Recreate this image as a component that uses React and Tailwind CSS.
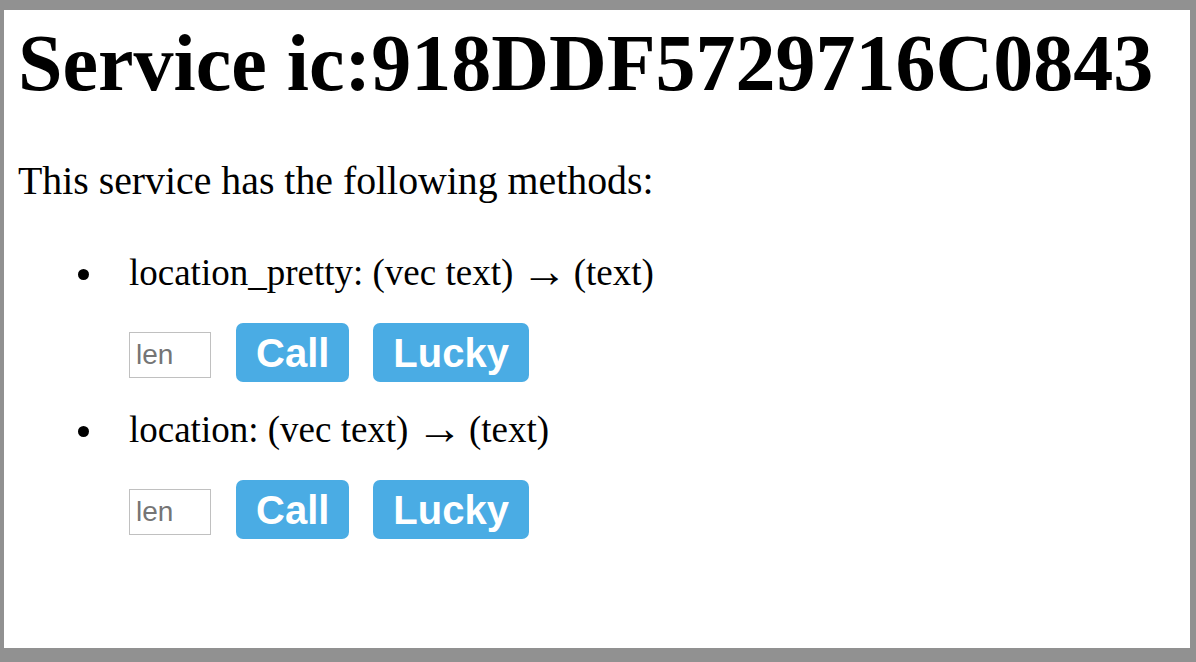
import React from 'react';

const methods = [
    { name: 'location_pretty', args: '(vec text)', ret: '(text)' },
    { name: 'location', args: '(vec text)', ret: '(text)' },
];

function MethodRow({ name, args, ret }) {
    return (
        <li className="flex flex-col">
            <div className="flex items-center h-[40px]">
                <span className="ml-[74px] mt-[2px] w-[11px] h-[11px] rounded-full bg-black"></span>
                <span className="ml-[40px] text-[37px] leading-[40px] whitespace-pre">
                    {name}: {args} <span className="-mx-[1px] text-[46px] leading-[0] align-[-2px]">→</span><span className="-ml-[2px]"> {ret}</span>
                </span>
            </div>
            <div className="flex items-start gap-[25px] ml-[125px] mt-[30px]">
                <input
                    type="text"
                    placeholder="len"
                    className="mt-[9px] w-[82px] h-[46px] border border-[#c0c0c0] px-[6px] text-[28px] placeholder-[#757575] outline-none font-['Liberation_Sans',Arial,sans-serif]"
                />
                <button className="h-[59px] px-[20px] rounded-[7px] bg-[#4aace4] text-white font-bold text-[40px] leading-none font-['Liberation_Sans',Arial,sans-serif]">
                    Call
                </button>
                <button className="-ml-[1px] h-[59px] px-[20px] rounded-[7px] bg-[#4aace4] text-white font-bold text-[40px] leading-none font-['Liberation_Sans',Arial,sans-serif]">
                    Lucky
                </button>
            </div>
        </li>
    );
}

export default function App() {
    return (
        <div className="w-[1196px] h-[662px] bg-[#919191] pt-[10px] pl-[4px] pr-[6px] pb-[14px]">
            <div className="w-full h-full bg-white pl-[14px] text-black font-['Liberation_Serif','Times_New_Roman',serif]">
                <h1 className="pt-[13px] text-[80px] leading-[80px] font-bold">Service ic:918DDF5729716C0843</h1>
                <p className="mt-[58px] text-[39.8px] leading-[40px]">This service has the following methods:</p>
                <ul className="mt-[52px] -ml-[14px] flex flex-col gap-[28px]">
                    {methods.map((m) => (
                        <MethodRow key={m.name} {...m} />
                    ))}
                </ul>
            </div>
        </div>
    );
}
